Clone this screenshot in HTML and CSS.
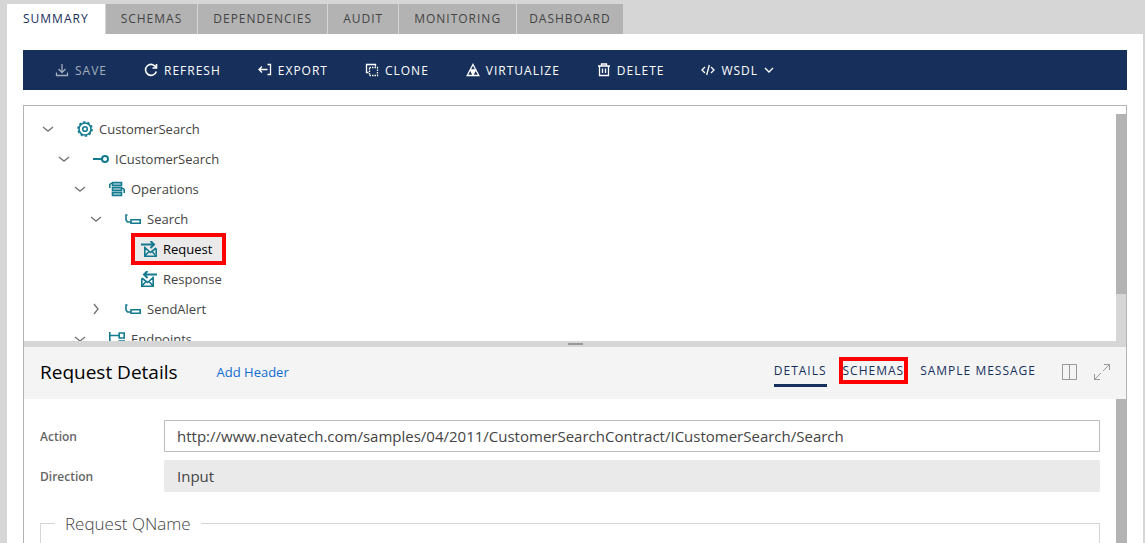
FILE: index.html
```
<!DOCTYPE html>
<html lang="en">
<head>
    <meta charset="UTF-8">
    <title>Service Summary</title>
    <link rel="stylesheet" href="styles.css">
</head>
<body>
    <!-- Main tabs -->
    <nav class="tabs">
        <a href="#" class="tab active">Summary</a>
        <a href="#" class="tab">Schemas</a>
        <a href="#" class="tab">Dependencies</a>
        <a href="#" class="tab">Audit</a>
        <a href="#" class="tab">Monitoring</a>
        <a href="#" class="tab">Dashboard</a>
    </nav>

    <main class="page">
        <!-- Toolbar -->
        <div class="toolbar">
            <button type="button" class="tool" disabled>
                <svg class="tool-icon" viewBox="0 0 14 14"><path d="M7 1v8M3.500 6L7 9.500 10.500 6M1.500 9.500v3h11v-3"/></svg>
                Save
            </button>
            <button type="button" class="tool">
                <svg class="tool-icon bold" viewBox="0 0 14 14"><path d="M12 4.500A5.500 5.500 0 1 0 12.300 8.500M12.500 1v4H8.500"/></svg>
                Refresh
            </button>
            <button type="button" class="tool">
                <svg class="tool-icon" viewBox="0 0 14 14"><path d="M1 6.500h8.500M4 3.500l-3 3 3 3M9.500 1.500h3v10h-3"/></svg>
                Export
            </button>
            <button type="button" class="tool">
                <svg class="tool-icon" viewBox="0 0 14 14"><path d="M3.500 9.500h-2v-8h9v2"/><path d="M4.500 4.500h8v8h-8z" stroke-dasharray="1.500 1"/></svg>
                Clone
            </button>
            <button type="button" class="tool">
                <svg class="tool-icon" viewBox="0 0 14 14"><path d="M7 1.500L12.800 12.500H1.200zM4.500 7h5L7 12z"/><path d="M5 7.500h4l-2 2.500z" fill="currentColor"/></svg>
                Virtualize
            </button>
            <button type="button" class="tool">
                <svg class="tool-icon" viewBox="0 0 14 14"><path d="M1 3h12M4.500 3V1h5v2M2.500 3v9.500h9V3M5.500 5.500V10M8.500 5.500V10"/></svg>
                Delete
            </button>
            <button type="button" class="tool">
                <svg class="tool-icon" viewBox="0 0 14 14"><path d="M4 4L1 7l3 3M10 4l3 3-3 3M8.300 2L5.700 12"/></svg>
                WSDL
                <svg class="caret" viewBox="0 0 10 10"><path d="M1 3l4 4 4-4"/></svg>
            </button>
        </div>

        <div class="frame">
            <!-- Service tree -->
            <section class="tree-pane">
                <ul class="tree">
                    <li>
                        <div class="node">
                            <button type="button" class="toggle" aria-label="Collapse"><svg viewBox="0 0 12 12"><path d="M1 4l5 4 5-4"/></svg></button>
                            <svg class="node-icon" viewBox="0 0 16 16"><circle cx="8" cy="8" r="6"/><circle cx="8" cy="8" r="7" stroke-dasharray="2.400 2"/><circle cx="8" cy="8" r="2.300"/></svg>
                            <span class="node-label">CustomerSearch</span>
                        </div>
                        <ul>
                            <li>
                                <div class="node">
                                    <button type="button" class="toggle" aria-label="Collapse"><svg viewBox="0 0 12 12"><path d="M1 4l5 4 5-4"/></svg></button>
                                    <svg class="node-icon" viewBox="0 0 16 16"><path d="M0 8h9" stroke-width="2"/><circle cx="12" cy="8" r="3" stroke-width="2"/></svg>
                                    <span class="node-label">ICustomerSearch</span>
                                </div>
                                <ul>
                                    <li>
                                        <div class="node">
                                            <button type="button" class="toggle" aria-label="Collapse"><svg viewBox="0 0 12 12"><path d="M1 4l5 4 5-4"/></svg></button>
                                            <svg class="node-icon" viewBox="0 0 16 16"><path class="tint" d="M3.500 1.500h9v3h-9zM3.500 6.500h9v3h-9zM3.500 11.500h9v3h-9z"/><path d="M3.500 2.500H2L.8 3.500V7M12.500 7.500H14l1.200 1V12"/></svg>
                                            <span class="node-label">Operations</span>
                                        </div>
                                        <ul>
                                            <li>
                                                <div class="node">
                                                    <button type="button" class="toggle" aria-label="Collapse"><svg viewBox="0 0 12 12"><path d="M1 4l5 4 5-4"/></svg></button>
                                                    <svg class="node-icon" viewBox="0 0 16 16"><path d="M2.500 4H1v5l1.500 2H6"/><path d="M6 8.800h9.200v3.500H6z"/></svg>
                                                    <span class="node-label">Search</span>
                                                </div>
                                                <ul>
                                                    <li>
                                                        <div class="node">
                                                            <span class="toggle"></span>
                                                            <div class="selected">
                                                                <svg class="node-icon" viewBox="0 0 16 16"><path d="M0 3.500h12.500M9.500 0L13 3.500 9.500 7" stroke-width="2"/><path d="M3.800 5.500v9.700h11.400V7.500M3.800 6.500l5.700 5 5.700-4.500M3.800 15l4.200-4.500M15.200 15L11 10.500"/></svg>
                                                                <span class="node-label">Request</span>
                                                            </div>
                                                        </div>
                                                    </li>
                                                    <li>
                                                        <div class="node">
                                                            <span class="toggle"></span>
                                                            <svg class="node-icon" viewBox="0 0 16 16"><path d="M16 3.500H3.500M6.500 0L3 3.500 6.500 7" stroke-width="2"/><path d="M12.200 5.500v9.700H.8V7.500M12.200 6.500l-5.700 5L.8 7M12.200 15L8 10.500M.8 15L5 10.500"/></svg>
                                                            <span class="node-label">Response</span>
                                                        </div>
                                                    </li>
                                                </ul>
                                            </li>
                                            <li>
                                                <div class="node">
                                                    <button type="button" class="toggle" aria-label="Expand"><svg viewBox="0 0 12 12"><path d="M4 1l4 5-4 5"/></svg></button>
                                                    <svg class="node-icon" viewBox="0 0 16 16"><path d="M2.500 4H1v5l1.500 2H6"/><path d="M6 8.800h9.200v3.500H6z"/></svg>
                                                    <span class="node-label">SendAlert</span>
                                                </div>
                                            </li>
                                        </ul>
                                    </li>
                                    <li>
                                        <div class="node">
                                            <button type="button" class="toggle" aria-label="Collapse"><svg viewBox="0 0 12 12"><path d="M1 4l5 4 5-4"/></svg></button>
                                            <svg class="node-icon" viewBox="0 0 16 16"><path d="M.8 1v14M1 4.500h9M1 12h9M10.200 2h5v5h-5zM10.200 10h5v5h-5z"/></svg>
                                            <span class="node-label">Endpoints</span>
                                        </div>
                                    </li>
                                </ul>
                            </li>
                        </ul>
                    </li>
                </ul>
                <div class="scrollbar"><div class="thumb"></div></div>
            </section>

            <div class="splitter"><span class="grip"></span></div>

            <!-- Details of the selected node -->
            <section class="details">
                <header class="details-header">
                    <h2>Request Details</h2>
                    <a href="#" class="add-header">Add Header</a>
                    <nav class="views">
                        <a href="#" class="view current">Details</a>
                        <a href="#" class="view marked">Schemas</a>
                        <a href="#" class="view">Sample Message</a>
                    </nav>
                    <button type="button" class="icon-button" aria-label="Split view"><svg viewBox="0 0 18 18"><path d="M2.500 1.500h14v15h-14zM9.500 1.500v15"/></svg></button>
                    <button type="button" class="icon-button" aria-label="Full screen"><svg viewBox="0 0 18 18"><path d="M11 1.500h5.500V7M16.500 1.500L10 8M8 10l-6.500 6.500M1.500 11v5.500H7"/></svg></button>
                </header>
                <div class="details-body">
                    <form class="fields">
                        <div class="field">
                            <label for="action">Action</label>
                            <input type="text" id="action" value="http://www.nevatech.com/samples/04/2011/CustomerSearchContract/ICustomerSearch/Search">
                        </div>
                        <div class="field">
                            <label for="direction">Direction</label>
                            <input type="text" id="direction" value="Input" readonly>
                        </div>
                        <fieldset>
                            <legend>Request QName</legend>
                        </fieldset>
                    </form>
                    <div class="details-scrollbar"></div>
                </div>
            </section>
        </div>
    </main>
</body>
</html>
```
FILE: styles.css
```
* {
    box-sizing: border-box;
}

body {
    margin: 0;
    padding: 4px 2px 0 7px;
    height: 100vh;
    display: flex;
    flex-direction: column;
    overflow: hidden;
    background-color: #d6d6d6;
    color: #444;
    font-family: "Open Sans", "Noto Sans", sans-serif;
    font-size: 13px;
}

a {
    text-decoration: none;
}

button {
    padding: 0;
    border: none;
    background: none;
    color: inherit;
    font-family: inherit;
    cursor: pointer;
}

svg {
    display: block;
    fill: none;
    stroke: currentColor;
}

ul {
    list-style: none;
    margin: 0;
    padding: 0;
}

/* Main tabs */
.tabs {
    display: flex;
    gap: 1px;
}

.tab {
    padding: 0 15px;
    background-color: #b3b3b3;
    color: #444;
    font-size: 12px;
    line-height: 30px;
    letter-spacing: 1px;
    text-transform: uppercase;
}

.tab.active {
    padding: 0 16px;
    background-color: #fff;
    color: #17305b;
}

.tab:last-child {
    padding: 0 12px;
}

.page {
    flex: 1;
    min-height: 0;
    display: flex;
    flex-direction: column;
    gap: 15px;
    padding: 16px 16px 0;
    background-color: #fff;
}

/* Toolbar */
.toolbar {
    display: flex;
    gap: 37px;
    height: 40px;
    flex-shrink: 0;
    padding-left: 32px;
    background-color: #17305b; /* Navy */
}

.tool {
    display: flex;
    align-items: center;
    gap: 6px;
    color: #fff;
    font-size: 12px;
    letter-spacing: 1px;
    text-transform: uppercase;
}

.tool:disabled {
    color: #a2acbd;
    cursor: default;
}

.tool-icon {
    width: 14px;
    height: 14px;
    stroke-width: 1.3;
}

.tool-icon.bold {
    stroke-width: 1.6;
}

.caret {
    width: 10px;
    height: 10px;
    stroke-width: 1.3;
}

.frame {
    flex: 1;
    min-height: 0;
    display: flex;
    flex-direction: column;
    border: 1px solid #b3b3b3;
    border-bottom: none;
}

/* Tree */
.tree-pane {
    display: flex;
    height: 235px;
    flex-shrink: 0;
    overflow: hidden;
}

.tree {
    flex: 1;
    padding: 8px 0 0 18px;
}

.tree ul {
    padding-left: 16px;
}

.node {
    display: flex;
    align-items: center;
    height: 30px;
}

.toggle {
    width: 12px;
    height: 12px;
    margin-right: 23px;
    color: #777;
    stroke-width: 1.4;
}

.node-icon {
    width: 16px;
    height: 16px;
    margin-right: 6px;
    color: #147a8f; /* Teal */
    stroke-width: 1.6;
}

.tint {
    fill: #9cc8d0;
}

.selected {
    display: flex;
    align-items: center;
    height: 24px;
    margin-left: -6px;
    padding: 0 10px 0 6px;
    background-color: #eaeaea;
    color: #000;
    outline: 4px solid #f00;
}

.scrollbar {
    width: 10px;
    margin-top: 8px;
    background-color: #d6d6d6;
}

.thumb {
    height: 180px;
    background-color: #b3b3b3;
}

.splitter {
    display: flex;
    justify-content: center;
    align-items: center;
    height: 6px;
    flex-shrink: 0;
    background-color: #d6d6d6;
}

.grip {
    width: 15px;
    height: 2px;
    background-color: #999;
}

/* Details */
.details {
    flex: 1;
    min-height: 0;
    display: flex;
    flex-direction: column;
}

.details-header {
    display: flex;
    align-items: center;
    height: 52px;
    flex-shrink: 0;
    padding: 0 15px 2px 16px;
    background-color: #f4f4f4;
}

h2 {
    margin: 0 39px 0 0;
    color: #000;
    font-size: 19px;
    font-weight: 400;
}

.add-header {
    color: #0f6cd0;
}

.views {
    display: flex;
    align-items: flex-start;
    gap: 16px;
    margin: 0 24px 0 auto;
}

.view {
    border-bottom: 3px solid transparent;
    color: #17305b;
    font-size: 12px;
    line-height: 27px;
    letter-spacing: 1px;
    text-transform: uppercase;
}

.view.current {
    border-color: #17305b;
}

.view.marked {
    margin: 0 -4px;
    border: 4px solid #f00;
    line-height: 19px;
}

.icon-button {
    width: 18px;
    height: 18px;
    color: #999;
}

.icon-button + .icon-button {
    margin-left: 15px;
}

.details-body {
    flex: 1;
    min-height: 0;
    display: flex;
}

.fields {
    flex: 1;
    display: flex;
    flex-direction: column;
    padding: 21px 16px 0;
}

.field {
    display: flex;
    align-items: center;
    margin-bottom: 8px;
}

label {
    width: 124px;
    color: #666;
    font-size: 12px;
    font-weight: 600;
}

input {
    flex: 1;
    height: 32px;
    padding: 0 12px;
    border: 1px solid #bfbfbf;
    background-color: #fff;
    color: #444;
    font-family: inherit;
    font-size: 15px;
}

input:read-only {
    border-color: #eaeaea;
    background-color: #eaeaea;
}

fieldset {
    flex: 1;
    margin: 12px 0 0;
    padding: 0 14px;
    border: 1px solid #d6d6d6;
    border-bottom: none;
}

legend {
    padding: 0 10px;
    font-size: 17px;
    font-weight: 300;
}

.details-scrollbar {
    width: 10px;
    background-color: #b3b3b3;
}
```
